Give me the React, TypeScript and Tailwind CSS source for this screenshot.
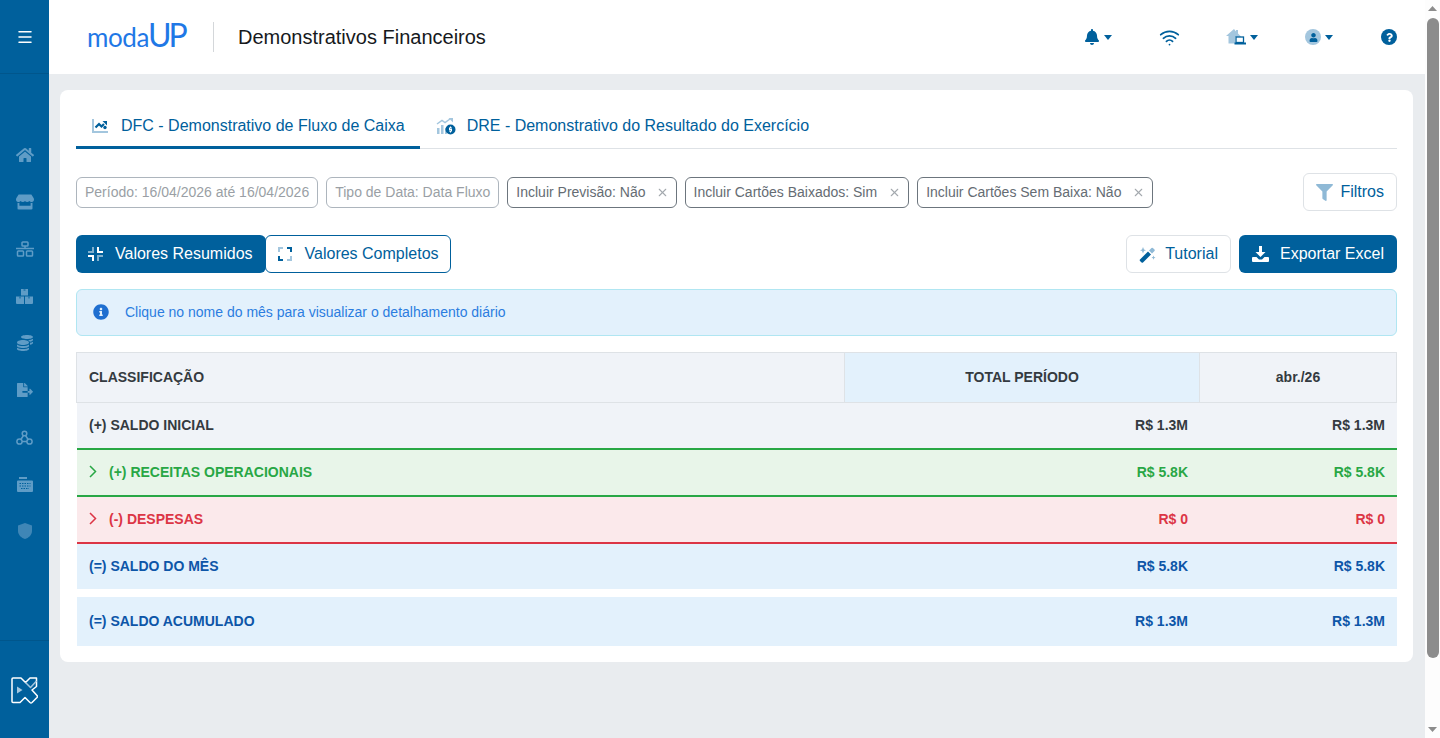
import { FaHome, FaStore, FaCoins, FaFileExport, FaBell, FaFilter, FaInfoCircle, FaQuestion, FaUser } from 'react-icons/fa'
import { Menu, Wifi, X } from 'lucide-react'

const Caret = () => (
  <svg width="8" height="5" viewBox="0 0 8 5" className="ml-1"><path d="M0 0h8L4 5z" fill="#00609c" /></svg>
)

const Chevron = () => (
  <svg width="8" height="13" viewBox="0 0 8 13" fill="none" stroke="currentColor" strokeWidth="1.500" className="mr-3">
    <path d="m1 1 5.500 5.500L1 12" />
  </svg>
)

const ChartIcon = () => (
  <svg width="16" height="14" viewBox="0 0 16 14">
    <path d="M0 0h2v12h14v2H0z" fill="#a3c6de" />
    <path d="M3.500 8.500 7 5l2.500 2.500L12 5" fill="none" stroke="#00609c" strokeWidth="2.200" />
    <path d="M10.500 2H15v4.500z" fill="#00609c" />
    <circle cx="13" cy="8.500" r="1.700" fill="#00609c" />
  </svg>
)

const DreIcon = () => (
  <svg width="20" height="17" viewBox="0 0 20 17">
    <path d="M1 10h2.500v6H1zM5 7h2.500v9H5zM9 10h2v6H9z" fill="#a3c6de" />
    <path d="M1 6 6 2.500l3 2 5-3.500" fill="none" stroke="#a3c6de" strokeWidth="1.500" />
    <path d="M12.500 0h4.500v4.500z" fill="#a3c6de" />
    <circle cx="14.500" cy="11.500" r="5" fill="#00609c" />
    <path d="M14 8.500h1v1h1v1h-2v.6h2v2.400h-1v1h-1v-1h-1v-1h2v-.6h-2V9.500h1z" fill="#fff" />
  </svg>
)

const HomeLaptop = () => (
  <svg width="20" height="16" viewBox="0 0 20 16">
    <path d="M8 0 0 7h2.500v7.500H9V8h6v-.5L12 4.500V1h-2v1.500z" fill="#a3c6de" />
    <rect x="10" y="8" width="7.500" height="5.500" fill="#fff" stroke="#00609c" strokeWidth="1.300" />
    <path d="M8.500 13.500H20V15.500H8.500z" fill="#00609c" />
  </svg>
)

const UserIcon = () => (
  <div className="flex h-4 w-4 items-center justify-center rounded-full bg-[#a3c6de]">
    <FaUser size={9} color="#00609c" />
  </div>
)

const CompressIcon = () => (
  <svg width="15" height="14" viewBox="0 0 15 14">
    <path d="M4 0h2v6H0V4h4z" fill="#7fafcd" />
    <path d="M9 0h2v4h4v2H9z" fill="#fff" />
    <path d="M0 8h6v6H4v-4H0z" fill="#fff" />
    <path d="M9 8h6v2h-4v4H9z" fill="#7fafcd" />
  </svg>
)

const ExpandIcon = () => (
  <svg width="14" height="14" viewBox="0 0 14 14">
    <path d="M0 0h5v2H2v3H0z" fill="#a3c6de" />
    <path d="M9 0h5v5h-2V2H9z" fill="#00609c" />
    <path d="M0 9h2v3h3v2H0z" fill="#00609c" />
    <path d="M12 9h2v5H9v-2h3z" fill="#a3c6de" />
  </svg>
)

const WandIcon = () => (
  <svg width="17" height="17" viewBox="0 0 17 17">
    <path d="m1 13.500 8-8 3 3-8 8a1 1 0 0 1-1.400 0L1 14.900a1 1 0 0 1 0-1.400z" fill="#00609c" />
    <path d="m10 4.500 2.500-2.500a1 1 0 0 1 1.400 0l1.600 1.600a1 1 0 0 1 0 1.400L13 7.500z" fill="#8fb9d6" />
    <path d="M4 1 5 3.500l2 .8-2 .8L4 7.500 3 5.100 1 4.300l2-.8zM14.500 9.500l.6 1.500 1.400.6-1.400.6-.6 1.500-.6-1.500-1.400-.6 1.400-.6z" fill="#8fb9d6" />
  </svg>
)

const DownloadIcon = () => (
  <svg width="17" height="16" viewBox="0 0 17 16">
    <path d="M7 0h3v6h3.500l-5 5-5-5H7z" fill="#fff" />
    <path d="M1 11h3.500l2.500 2.500h3L12.500 11H16a1 1 0 0 1 1 1v3a1 1 0 0 1-1 1H1a1 1 0 0 1-1-1v-3a1 1 0 0 1 1-1z" fill="#fff" />
  </svg>
)

const sideIcon = 'text-[#5f9cc6]'

const SitemapIcon = () => (
  <svg width="18" height="16" viewBox="0 0 18 16" fill="none" stroke="#5f9cc6" strokeWidth="1.500">
    <rect x="6" y="1" width="6" height="4" rx=".8" />
    <path d="M0 7.500h18" />
    <path d="M9 5v2.500" />
    <rect x="1.500" y="10" width="6" height="5" rx=".8" />
    <rect x="10.500" y="10" width="6" height="5" rx=".8" />
  </svg>
)

const BoxesIcon = () => (
  <svg width="17" height="15" viewBox="0 0 17 15">
    <path d="M5 0h7v6.500H5z" fill="#5f9cc6" />
    <path d="M0 7.500h8V15H1a1 1 0 0 1-1-1zM9 7.500h8V14a1 1 0 0 1-1 1H9z" fill="#5f9cc6" />
    <path d="M7.500 0h2v2h-2zM3 7.500h2v2H3zM12 7.500h2v2h-2z" fill="#00609c" opacity=".5" />
  </svg>
)

const WebhookIcon = () => (
  <svg width="17" height="15" viewBox="0 0 17 15" fill="none" stroke="#5f9cc6" strokeWidth="1.500">
    <circle cx="8.500" cy="3.500" r="2.300" />
    <circle cx="3.500" cy="11.500" r="2.600" />
    <circle cx="13.500" cy="11.500" r="2.600" />
    <path d="M7.500 5.500 4.500 10M9.500 5.500l3 4.500M6 11.500h5" />
  </svg>
)

const KeyboardIcon = () => (
  <svg width="16" height="15" viewBox="0 0 16 15">
    <path d="M2 0h8v2H2zM1 3.500h14a1 1 0 0 1 1 1V14a1 1 0 0 1-1 1H1a1 1 0 0 1-1-1V4.500a1 1 0 0 1 1-1z" fill="#5f9cc6" />
    <path d="M2.500 6.500h11M2.500 9h11M4 11.500h8" stroke="#00609c" strokeWidth="1" strokeDasharray="1.500 1" />
  </svg>
)

const ShieldIcon = () => (
  <svg width="14" height="16" viewBox="0 0 14 16"><path d="M7 0 14 2.500V8c0 4-3.500 7-7 8-3.500-1-7-4-7-8V2.500z" fill="#3f86b6" /></svg>
)

const Brand = () => (
  <svg width="27" height="27" viewBox="0 0 27 27" fill="none" stroke="#fff" strokeWidth="1.500" strokeLinejoin="round">
    <path d="M2 1h8l4.500 4.500L19 1h6.500v8.500L21 13l5 5.500a1.500 1.500 0 0 1 0 2L21 25.500a1.500 1.500 0 0 1-2 0L14 20.500 9 25.500H2A1 1 0 0 1 1 24.500V2a1 1 0 0 1 1-1z" />
    <path d="M6 9.500 11.500 13 6 16.500z" fill="#a3c6de" stroke="none" />
    <path d="m14.500 5.500 5 5 6-6.500" stroke="#a3c6de" />
  </svg>
)

const Chip = ({ label, muted, wide }: { label: string; muted?: boolean; wide?: boolean }) => (
  <div className={`flex h-[31px] items-center rounded-md border px-2 text-sm ${muted ? 'border-[#adb5bd] text-[#9a9fa5]' : 'border-[#6c757d] text-[#656c73]'}`}>
    <span>{label}</span>
    {!muted && <X size={13} className={`-mr-px text-[#a4a9ae] ${wide ? 'ml-[11px]' : 'ml-[10px]'}`} />}
  </div>
)

type Row = { label: string; total: string; text: string; bg: string; border?: string; expand?: boolean; h: string }

const rows: Row[] = [
  { label: '(+) SALDO INICIAL', total: 'R$ 1.3M', text: 'text-[#343a40]', bg: 'bg-[#f0f3f8]', border: 'border-b-2 border-[#28a745]', h: 'h-[47px]' },
  { label: '(+) RECEITAS OPERACIONAIS', total: 'R$ 5.8K', text: 'text-[#28a745]', bg: 'bg-[#e8f5e9]', border: 'border-b-2 border-[#28a745]', expand: true, h: 'h-[47px]' },
  { label: '(-) DESPESAS', total: 'R$ 0', text: 'text-[#dc3545]', bg: 'bg-[#fbe9eb]', border: 'border-b-2 border-[#dc3545]', expand: true, h: 'h-[47px]' },
  { label: '(=) SALDO DO MÊS', total: 'R$ 5.8K', text: 'text-[#0d56a8]', bg: 'bg-[#e3f1fc]', h: 'h-[45px]' },
]

const TableRow = ({ r }: { r: Row }) => (
  <div className={`grid grid-cols-[768px_355px_1fr] items-center pb-[2px] text-sm font-bold ${r.h} ${r.bg} ${r.border ?? ''} ${r.text}`}>
    <div className="flex items-center pl-3">
      {r.expand && <Chevron />}
      <span>{r.label}</span>
    </div>
    <div className="pr-3 text-right">{r.total}</div>
    <div className="pr-3 text-right">{r.total}</div>
  </div>
)

export default function App() {
  return (
    <div className="flex h-[738px] w-[1440px] overflow-hidden bg-[#e9ecef] font-['Liberation_Sans',Arial,sans-serif]">
      {/* sidebar */}
      <aside className="flex w-[49px] shrink-0 flex-col bg-[#00609c]">
        <div className="flex h-[74px] items-center justify-center border-b border-[#00568c]">
          <Menu size={18} className="text-white" />
        </div>
        <nav className="flex flex-1 flex-col items-center gap-[27px] pt-[71px]">
          <div className="flex h-5 items-center"><FaHome size={18} className={sideIcon} /></div>
          <div className="flex h-5 items-center"><FaStore size={18} className={sideIcon} /></div>
          <div className="flex h-5 items-center"><SitemapIcon /></div>
          <div className="flex h-5 items-center"><BoxesIcon /></div>
          <div className="flex h-5 items-center"><FaCoins size={16} className={sideIcon} /></div>
          <div className="flex h-5 items-center"><FaFileExport size={16} className={sideIcon} /></div>
          <div className="flex h-5 items-center"><WebhookIcon /></div>
          <div className="flex h-5 items-center"><KeyboardIcon /></div>
          <div className="flex h-5 items-center"><ShieldIcon /></div>
        </nav>
        <div className="flex h-[98px] items-center justify-center border-t border-[#00568c] pt-[1px]">
          <Brand />
        </div>
      </aside>

      {/* main */}
      <main className="flex min-w-0 flex-1 flex-col">
        <header className="flex h-[74px] shrink-0 items-center bg-white pl-[38px]">
          <div className="mb-1 flex w-[99px] items-baseline leading-none text-[#1f78e6]">
            <span className="font-['Lato',sans-serif] text-[26px] tracking-[-0.4px]">moda</span>
            <span className="-ml-px font-['Lato',sans-serif] text-[32px] tracking-[-3px]">UP</span>
          </div>
          <div className="ml-[27px] h-[30px] w-px bg-[#d4d7da]" />
          <h1 className="ml-[24px] text-xl text-[#16191c]">Demonstrativos Financeiros</h1>
          <div className="ml-auto flex items-center pr-[28px]">
            <div className="flex items-center"><FaBell size={16} color="#00609c" /><Caret /></div>
            <Wifi size={21} strokeWidth={2} className="ml-[47px] text-[#00609c]" />
            <div className="ml-[46px] flex items-center"><HomeLaptop /><Caret /></div>
            <div className="ml-[47px] flex items-center"><UserIcon /><Caret /></div>
            <div className="ml-[48px] flex h-4 w-4 items-center justify-center rounded-full bg-[#00609c]"><FaQuestion size={9} color="#fff" /></div>
          </div>
        </header>

        <div className="flex-1 pl-[11px] pr-[12px] pt-4">
          <section className="rounded-lg bg-white p-4 pt-0">
            {/* tabs */}
            <div className="flex h-[59px] border-b border-[#dee2e6] text-base text-[#00609c]">
              <div className="-mb-px flex h-[59px] items-center gap-[13px] border-b-[3px] border-[#00609c] pl-4 pr-[15px] pt-[16px]">
                <ChartIcon />
                <span>DFC - Demonstrativo de Fluxo de Caixa</span>
              </div>
              <div className="flex items-center gap-[11px] px-4 pt-[14px]">
                <DreIcon />
                <span>DRE - Demonstrativo do Resultado do Exercício</span>
              </div>
            </div>

            {/* filters */}
            <div className="mt-[24px] flex items-center gap-2">
              <Chip label="Período: 16/04/2026 até 16/04/2026" muted />
              <Chip label="Tipo de Data: Data Fluxo" muted />
              <Chip label="Incluir Previsão: Não" />
              <Chip label="Incluir Cartões Baixados: Sim" wide />
              <Chip label="Incluir Cartões Sem Baixa: Não" wide />
              <button className="ml-auto flex h-[38px] items-center gap-[7px] rounded-md border border-[#dee2e6] bg-white px-3 text-base text-[#00609c]">
                <FaFilter size={17} color="#8fb9d6" />
                Filtros
              </button>
            </div>

            {/* actions */}
            <div className="mt-[24px] flex items-center">
              <button className="flex h-[38px] items-center gap-[12px] rounded-md bg-[#00609c] pl-3 pr-[13px] text-base text-white">
                <CompressIcon />
                Valores Resumidos
              </button>
              <button className="-ml-px flex h-[38px] items-center gap-[13px] rounded-md border border-[#00609c] bg-white pl-3 pr-[11px] text-base text-[#00609c]">
                <ExpandIcon />
                Valores Completos
              </button>
              <button className="ml-auto flex h-[38px] items-center gap-[9px] rounded-md border border-[#dee2e6] bg-white px-3 text-base text-[#00609c]">
                <WandIcon />
                Tutorial
              </button>
              <button className="ml-2 flex h-[38px] items-center gap-[11px] rounded-md bg-[#00609c] pl-[13px] pr-[13px] text-base text-white">
                <DownloadIcon />
                Exportar Excel
              </button>
            </div>

            {/* info */}
            <div className="mt-4 flex h-[47px] items-center gap-4 rounded-md border border-[#b0e6f2] bg-[#e3f1fc] px-4 pb-[2px] text-sm text-[#2b7de0]">
              <FaInfoCircle size={16} color="#1f6fd0" />
              <span>Clique no nome do mês para visualizar o detalhamento diário</span>
            </div>

            {/* table */}
            <div className="mt-4">
              <div className="grid h-[51px] grid-cols-[767px_356px_1fr] border border-[#dee2e6] bg-[#f0f3f8] text-sm font-bold text-[#343a40]">
                <div className="flex items-center pb-[2px] pl-3">CLASSIFICAÇÃO</div>
                <div className="flex items-center justify-center border-x border-[#dee2e6] bg-[#e3f1fc] pb-[2px]">TOTAL PERÍODO</div>
                <div className="flex items-center justify-center pb-[2px]">abr./26</div>
              </div>
              <div className="ml-px">
                {rows.map((r) => <TableRow key={r.label} r={r} />)}
                <div className="mt-2">
                  <TableRow r={{ label: '(=) SALDO ACUMULADO', total: 'R$ 1.3M', text: 'text-[#0d56a8]', bg: 'bg-[#e3f1fc]', h: 'h-[49px]' }} />
                </div>
              </div>
            </div>
          </section>
        </div>
      </main>

      {/* scrollbar */}
      <div className="flex w-[15px] shrink-0 flex-col items-center bg-[#fdfdfd]">
        <svg width="9" height="5" viewBox="0 0 9 5" className="mt-[6px]"><path d="M4.500 0 9 5H0z" fill="#8c8c8c" /></svg>
        <div className="mt-[7px] h-[640px] w-[12px] rounded-full bg-[#8c8c8c]" />
        <svg width="9" height="5" viewBox="0 0 9 5" className="mb-[6px] mt-auto"><path d="M0 0h9L4.500 5z" fill="#8c8c8c" /></svg>
      </div>
    </div>
  )
}
